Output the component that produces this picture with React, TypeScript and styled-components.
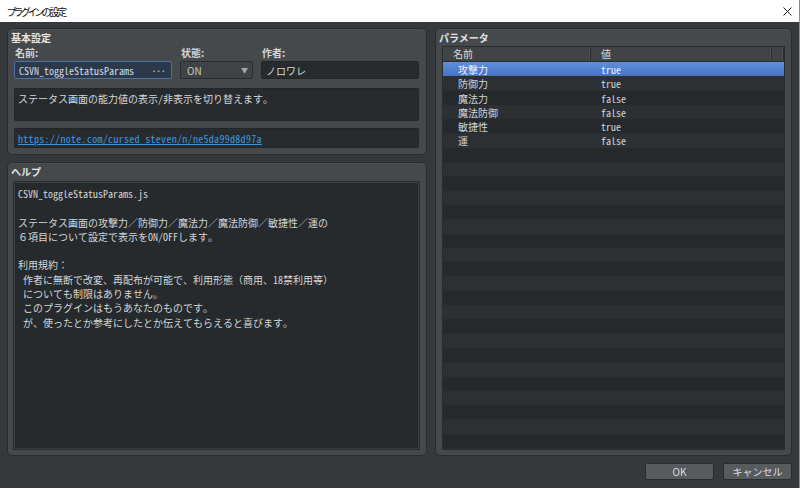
import styled, { createGlobalStyle } from 'styled-components';

const ui = `"Noto Sans CJK JP", "Noto Sans", sans-serif`;
const mono = `"Noto Sans Mono CJK JP", "DejaVu Sans Mono", "Noto Sans CJK JP", monospace`;

const GlobalStyle = createGlobalStyle`
  html, body {
    margin: 0;
    padding: 0;
    background: #35393c;
    overflow: hidden;
  }
  * {
    box-sizing: border-box;
  }
`;

const Window = styled.div`
  width: 800px;
  height: 488px;
  display: flex;
  flex-direction: column;
  background: #35393c;
  border-right: 1px solid #8c8c8c;
  font-family: ${ui};
  overflow: hidden;
`;

const TitleBar = styled.div`
  height: 22px;
  flex: none;
  background: #ffffff;
  display: flex;
  align-items: center;
  justify-content: space-between;
  padding: 0 6px 0 7px;
`;

const TitleText = styled.span`
  font-size: 10px;
  color: #111;
  font-feature-settings: "palt" 1;
  letter-spacing: -2px;
`;

const CloseIcon = styled.svg`
  width: 9px;
  height: 9px;
  margin-right: 1px;
`;

const Body = styled.div`
  flex: 1;
  min-height: 0;
  display: flex;
  flex-direction: column;
  padding: 6px 7px 8px 7px;
  gap: 7px;
`;

const Columns = styled.div`
  flex: 1;
  min-height: 0;
  display: grid;
  grid-template-columns: 420px 1fr;
  grid-template-rows: minmax(0, 1fr);
  gap: 8px;
`;

const LeftColumn = styled.div`
  display: flex;
  flex-direction: column;
  gap: 7px;
  min-height: 0;
`;

const Panel = styled.section<{ $grow?: boolean; $right?: boolean }>`
  background: #45494c;
  border: 1px solid #2a2d30;
  border-radius: 5px;
  box-shadow: inset 0 1px 0 rgba(255, 255, 255, 0.04);
  padding: ${(p) => (p.$right ? '0 6px 5px 6px' : '0 7px 6px 6px')};
  display: flex;
  flex-direction: column;
  flex: ${(p) => (p.$grow ? '1' : 'none')};
  min-height: 0;
  overflow: hidden;
`;

const PanelTitle = styled.h3`
  margin: 0 0 0 -3px;
  height: 17px;
  flex: none;
  line-height: 17px;
  font-size: 10px;
  font-weight: 700;
  color: #e2e4e6;
`;

const FieldGrid = styled.div`
  display: grid;
  grid-template-columns: 158px 73px 1fr;
  grid-template-rows: 15px 18px;
  column-gap: 8px;
`;

const Label = styled.label`
  font-size: 10px;
  font-weight: 700;
  color: #d4d6d8;
  line-height: 13px;
  padding-left: 1px;
`;

const NameField = styled.div`
  background: #2c394a;
  border: 1px solid #4c72a6;
  border-radius: 2px;
  display: flex;
  align-items: center;
  justify-content: space-between;
  padding: 0 6px 0 4px;
  font-family: ${mono};
  font-size: 10px;
  color: #d6dae0;
`;

const Dots = styled.span`
  color: #c8ccd2;
  letter-spacing: -1px;
`;

const SelectBox = styled.div`
  background: #3f4346;
  border: 1px solid #2a2d30;
  border-radius: 2px;
  display: flex;
  align-items: center;
  justify-content: space-between;
  padding: 0 4px 0 6px;
  font-size: 10px;
  color: #c6c9cc;
`;

const Caret = styled.span`
  font-size: 7px;
  color: #a4a8ac;
`;

const TextField = styled.div`
  background: #272b2e;
  border: 1px solid #232629;
  border-radius: 2px;
  display: flex;
  align-items: center;
  padding: 0 4px;
  font-family: ${mono};
  font-size: 10px;
  color: #d6d8da;
`;

const DescBox = styled.div`
  margin-top: 9px;
  height: 33px;
  background: #272b2e;
  border: 1px solid #232629;
  border-radius: 2px;
  padding: 3px 3px;
  font-family: ${mono};
  font-size: 10px;
  line-height: 14px;
  color: #d6d8da;
`;

const UrlBox = styled.div`
  margin-top: 7px;
  height: 20px;
  background: #272b2e;
  border: 1px solid #232629;
  border-radius: 2px;
  padding: 0 3px;
  display: flex;
  align-items: center;
  font-family: ${mono};
  font-size: 10px;
`;

const Link = styled.a`
  color: #3b98e0;
  text-decoration: underline;
  letter-spacing: 0.3px;
`;

const HelpArea = styled.div`
  flex: 1;
  min-height: 0;
  margin-top: 2px;
  background: #262a2d;
  border: 1px solid #3b3f42;
  outline: 1px solid #2a2d30;
  padding: 4px 3px;
  font-family: ${mono};
  font-size: 10px;
  line-height: 14.3px;
  color: #d4d6d8;
  white-space: pre;
  overflow: hidden;
`;

const Table = styled.div`
  flex: 1;
  min-height: 0;
  border: 1px solid #2a2d30;
  background: #25292c;
  display: flex;
  flex-direction: column;
  overflow: hidden;
`;

const HeaderRow = styled.div`
  display: grid;
  grid-template-columns: 148px 1fr 12px;
  height: 15px;
  flex: none;
  background: #404447;
  border-bottom: 1px solid #2a2d30;
`;

const HeaderCell = styled.div`
  font-size: 10px;
  line-height: 14px;
  color: #d8dadc;
  padding-left: 10px;
  border-right: 1px solid #2c2f32;
  box-shadow: inset -1px 0 0 #4c5053;
`;

const Row = styled.div<{ $alt: boolean; $selected?: boolean }>`
  display: grid;
  grid-template-columns: 148px 1fr;
  height: 14.3px;
  flex: none;
  align-items: center;
  font-family: ${mono};
  font-size: 10px;
  color: ${(p) => (p.$selected ? '#eef3fb' : '#d2d4d6')};
  background: ${(p) =>
    p.$selected
      ? 'linear-gradient(#5d8fdc, #4773c4)'
      : p.$alt
        ? '#2c3033'
        : '#25292c'};
`;

const NameCell = styled.span`
  padding-left: 15px;
`;

const ValueCell = styled.span`
  padding-left: 10px;
`;

const Footer = styled.div`
  height: 17px;
  flex: none;
  display: flex;
  justify-content: flex-end;
  gap: 9px;
`;

const Button = styled.button`
  width: 69px;
  height: 17px;
  padding: 0;
  background: #575b5e;
  border: 1px solid #2a2d30;
  border-radius: 2px;
  font-family: ${ui};
  font-size: 10px;
  line-height: 15px;
  color: #dcdee0;
`;

const params = [
  { name: '攻撃力', value: 'true' },
  { name: '防御力', value: 'true' },
  { name: '魔法力', value: 'false' },
  { name: '魔法防御', value: 'false' },
  { name: '敏捷性', value: 'true' },
  { name: '運', value: 'false' },
];

const helpText = `CSVN_toggleStatusParams.js

ステータス画面の攻撃力／防御力／魔法力／魔法防御／敏捷性／運の
６項目について設定で表示をON/OFFします。

利用規約：
 作者に無断で改変、再配布が可能で、利用形態（商用、18禁利用等）
 についても制限はありません。
 このプラグインはもうあなたのものです。
 が、使ったとか参考にしたとか伝えてもらえると喜びます。`;

const TOTAL_ROWS = 28;

export default function App() {
  const rows = Array.from({ length: TOTAL_ROWS }, (_, i) => params[i]);
  return (
    <Window>
      <GlobalStyle />
      <TitleBar>
        <TitleText>プラグインの設定</TitleText>
        <CloseIcon viewBox="0 0 9 9">
          <path d="M0.5 0.5 L8.5 8.5 M8.5 0.5 L0.5 8.5" stroke="#222" strokeWidth="1" />
        </CloseIcon>
      </TitleBar>
      <Body>
        <Columns>
          <LeftColumn>
            <Panel>
              <PanelTitle>基本設定</PanelTitle>
              <FieldGrid>
                <Label>名前:</Label>
                <Label>状態:</Label>
                <Label>作者:</Label>
                <NameField>
                  CSVN_toggleStatusParams
                  <Dots>···</Dots>
                </NameField>
                <SelectBox>
                  ON
                  <Caret>▼</Caret>
                </SelectBox>
                <TextField>ノロワレ</TextField>
              </FieldGrid>
              <DescBox>ステータス画面の能力値の表示/非表示を切り替えます。</DescBox>
              <UrlBox>
                <Link href="#">https://note.com/cursed_steven/n/ne5da99d8d97a</Link>
              </UrlBox>
            </Panel>
            <Panel $grow>
              <PanelTitle>ヘルプ</PanelTitle>
              <HelpArea>{helpText}</HelpArea>
            </Panel>
          </LeftColumn>
          <Panel $right>
            <PanelTitle>パラメータ</PanelTitle>
            <Table>
              <HeaderRow>
                <HeaderCell>名前</HeaderCell>
                <HeaderCell>値</HeaderCell>
                <HeaderCell />
              </HeaderRow>
              {rows.map((p, i) => (
                <Row key={i} $alt={i % 2 === 1} $selected={i === 0}>
                  <NameCell>{p?.name}</NameCell>
                  <ValueCell>{p?.value}</ValueCell>
                </Row>
              ))}
            </Table>
          </Panel>
        </Columns>
        <Footer>
          <Button>OK</Button>
          <Button>キャンセル</Button>
        </Footer>
      </Body>
    </Window>
  );
}
